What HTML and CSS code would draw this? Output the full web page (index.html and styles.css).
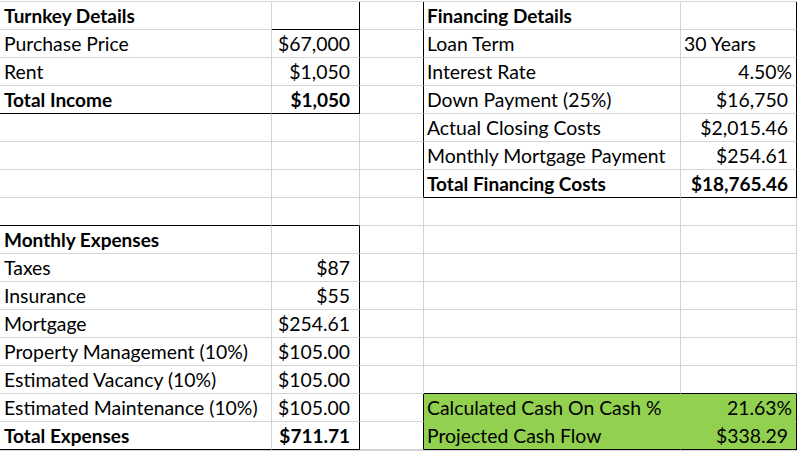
FILE: index.html
```html
<!DOCTYPE html>
<html>
<head>
<meta charset="utf-8">
<link rel="stylesheet" href="styles.css">
</head>
<body>
<div class="sheet">
  <!-- row 1 -->
  <div class="c a b">Turnkey Details</div>
  <div class="c bb br"></div>
  <div class="c br"></div>
  <div class="c d b">Financing Details</div>
  <div class="c e br"></div>
  <!-- row 2 -->
  <div class="c a">Purchase Price</div>
  <div class="c num br">$67,000</div>
  <div class="c br"></div>
  <div class="c d">Loan Term</div>
  <div class="c e br">30 Years</div>
  <!-- row 3 -->
  <div class="c a">Rent</div>
  <div class="c num br">$1,050</div>
  <div class="c br"></div>
  <div class="c d">Interest Rate</div>
  <div class="c e pct br">4.50%</div>
  <!-- row 4 -->
  <div class="c a b bb">Total Income</div>
  <div class="c num b br bb">$1,050</div>
  <div class="c br"></div>
  <div class="c d">Down Payment (25%)</div>
  <div class="c e num br">$16,750</div>
  <!-- row 5 -->
  <div class="c a"></div>
  <div class="c"></div>
  <div class="c br"></div>
  <div class="c d">Actual Closing Costs</div>
  <div class="c e num br">$2,015.46</div>
  <!-- row 6 -->
  <div class="c a"></div>
  <div class="c"></div>
  <div class="c br"></div>
  <div class="c d">Monthly Mortgage Payment</div>
  <div class="c e num br">$254.61</div>
  <!-- row 7 -->
  <div class="c a"></div>
  <div class="c"></div>
  <div class="c br"></div>
  <div class="c d b bb">Total Financing Costs</div>
  <div class="c e num b br bb">$18,765.46</div>
  <!-- row 8 -->
  <div class="c a bb"></div>
  <div class="c bb"></div>
  <div class="c"></div>
  <div class="c d"></div>
  <div class="c e"></div>
  <!-- row 9 -->
  <div class="c a b">Monthly Expenses</div>
  <div class="c br"></div>
  <div class="c"></div>
  <div class="c d"></div>
  <div class="c e"></div>
  <!-- row 10 -->
  <div class="c a">Taxes</div>
  <div class="c num br">$87</div>
  <div class="c"></div>
  <div class="c d"></div>
  <div class="c e"></div>
  <!-- row 11 -->
  <div class="c a">Insurance</div>
  <div class="c num br">$55</div>
  <div class="c"></div>
  <div class="c d"></div>
  <div class="c e"></div>
  <!-- row 12 -->
  <div class="c a">Mortgage</div>
  <div class="c num br">$254.61</div>
  <div class="c"></div>
  <div class="c d"></div>
  <div class="c e"></div>
  <!-- row 13 -->
  <div class="c a">Property Management (10%)</div>
  <div class="c num br">$105.00</div>
  <div class="c"></div>
  <div class="c d"></div>
  <div class="c e"></div>
  <!-- row 14 -->
  <div class="c a">Estimated Vacancy (10%)</div>
  <div class="c num br">$105.00</div>
  <div class="c"></div>
  <div class="c d bb"></div>
  <div class="c e bb"></div>
  <!-- row 15 -->
  <div class="c a">Estimated Maintenance (10%)</div>
  <div class="c num br">$105.00</div>
  <div class="c br"></div>
  <div class="c d g">Calculated Cash On Cash %</div>
  <div class="c e g pct br">21.63%</div>
  <!-- row 16 -->
  <div class="c a b bb">Total Expenses</div>
  <div class="c num b br bb">$711.71</div>
  <div class="c br"></div>
  <div class="c d g bb">Projected Cash Flow</div>
  <div class="c e g num br bb">$338.29</div>
  <!-- row 17 (partially visible) -->
  <div class="c a"></div>
  <div class="c"></div>
  <div class="c"></div>
  <div class="c d"></div>
  <div class="c e"></div>
</div>
</body>
</html>
```
FILE: styles.css
```css
html, body {
  margin: 0;
  padding: 0;
  background: #ffffff;
}

body {
  font-family: "Lato", "Liberation Sans", sans-serif;
  font-size: 19.4px;
  color: #000000;
  overflow: hidden;
}

.sheet {
  display: grid;
  grid-template-columns: 272px 88px 64px 257px 116px;
  grid-template-rows: repeat(16, 28px) 1px;
  margin-top: 1px;
  border-top: 1px solid #d4d4d4;
  width: 797px;
}

.c {
  box-sizing: border-box;
  border-right: 1px solid #d4d4d4;
  border-bottom: 1px solid #d4d4d4;
  line-height: 28px;
  padding: 0 3px;
  white-space: nowrap;
  overflow: visible;
}

.a {
  padding-left: 4px;
}

.b {
  font-weight: 700;
  font-size: 19px;
}

.num {
  text-align: right;
  padding-right: 9px;
}

.e.num {
  padding-right: 8px;
}

.pct {
  text-align: right;
  padding-right: 4px;
}

.br {
  border-right-color: #000000;
}

.bb {
  border-bottom-color: #000000;
}

.g {
  background: #92d050;
  border-bottom-color: #92d050;
}

.d.g {
  border-right-color: #92d050;
}

.g.bb {
  border-bottom-color: #000000;
}

.e.g {
  border-right-color: #000000;
}
```
